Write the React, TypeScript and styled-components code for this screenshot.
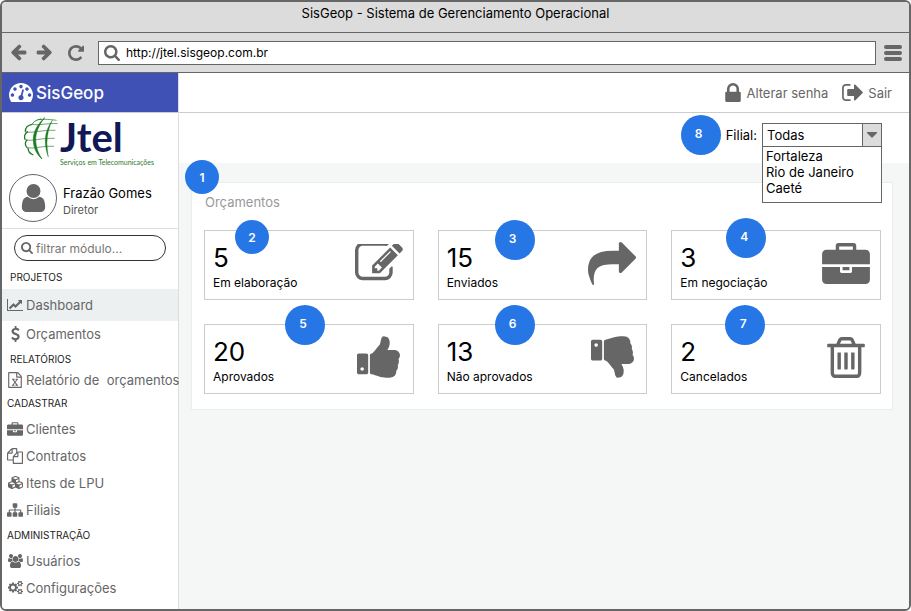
import React from "react";
import styled, { createGlobalStyle } from "styled-components";
import { FaCubes } from "react-icons/fa";

const ink = "#666666";
const accent = "#2676e6";
const line = "#cccccc";

const GlobalStyle = createGlobalStyle`
  *, *::before, *::after { box-sizing: border-box; }
  body { margin: 0; background: #fff; }
  body, button, input, select {
    font-family: Inter, "Open Sans", "Liberation Sans", sans-serif;
    font-size: 13px;
    color: #000;
  }
  button { padding: 0; border: 0; background: none; cursor: pointer; }
  a { color: inherit; text-decoration: none; }
  ul { list-style: none; margin: 0; padding: 0; }
`;

/* ---------- icons ---------- */

type Shape = { box: string; d: string; flip?: boolean };

const smallDots =
  "q0-53-37.5-90.5t-90.5-37.5-90.5 37.5-37.5 90.5 37.5 90.5 90.5 37.5 90.5-37.5 37.5-90.5z";
const bin = "v576q0 14-9 23t-23 9h-64q-14 0-23-9t-9-23v-576q0-14 9-23t23-9h64q14 0 23 9t9 23z";
const smallGear =
  "v140q0 16-149 31-12 27-30 52 51 113 51 138 0 4-4 7-122 71-124 71-8 0-46-47t-52-68q-20 2-30 2t-30-2q-14 21-52 68t-46 47q-2 0-124-71-4-3-4-7 0-25 51-138-18-25-30-52-149-15-149-31v-140q0-16 149-31 13-29 30-52-51-113-51-138 0-4 4-7 4-2 35-20t59-34 30-16q8 0 46 46.5t52 67.5q20-2 30-2t30 2q51-71 92-112l6-2q4 0 124 70 4 3 4 7 0 25-51 138 17 23 30 52 149 15 149 31z";
const thumb =
  "M320 1344q0-26-19-45t-45-19q-27 0-45.5 19t-18.5 45q0 27 18.5 45.5t45.5 18.5q26 0 45-18.5t19-45.5zm160-512v640q0 26-19 45t-45 19h-288q-26 0-45-19t-19-45v-640q0-26 19-45t45-19h288q26 0 45 19t19 45zm1184 0q0 86-55 149 15 44 15 76 3 76-43 137 17 56 0 117-15 57-54 94 9 112-49 181-64 76-197 78h-129q-66 0-144-15.5t-121.5-29-120.5-39.5q-123-43-158-44-26-1-45-19.5t-19-44.5v-641q0-25 18-43.5t43-20.5q24-2 76-59t101-121q68-87 101-120 18-18 31-48t17.5-48.5 13.5-60.5q7-39 12.5-61t19.5-52 34-50q19-19 45-19 46 0 82.5 10.5t60 26 40 40.5 24 45 12 50 5 45 .5 39q0 38-9.5 76t-19 60-27.5 56q-3 6-10 18t-11 22-8 24h277q78 0 135 57t57 135z";

const shapes: Record<string, Shape> = {
  back: {
    box: "64 128 1664 1664",
    d: "M1664 896v128q0 53-32.5 90.5t-84.5 37.5h-704l293 294q38 36 38 90t-38 90l-75 76q-37 37-90 37-52 0-91-37l-651-652q-37-37-37-90 0-52 37-91l651-650q38-38 91-38 52 0 90 38l75 74q38 38 38 91t-38 91l-293 293h704q52 0 84.5 37.5t32.5 90.5z",
  },
  reload: {
    box: "128 128 1536 1536",
    d: "M1664 256v448q0 26-19 45t-45 19h-448q-42 0-59-40-17-39 14-69l138-138q-148-137-349-137-104 0-198.5 40.5t-163.5 109.5-109.5 163.5-40.5 198.5 40.5 198.5 109.5 163.5 163.5 109.5 198.5 40.5q119 0 225-52t179-147q7-10 23-12 15 0 25 9l137 138q9 8 9.5 20.5t-7.5 22.5q-109 132-264 204.5t-327 72.5q-156 0-298-61t-245-164-164-245-61-298 61-298 164-245 245-164 298-61q147 0 284.5 55.5t244.5 156.5l130-129q29-31 70-14 39 17 39 59z",
  },
  search: {
    box: "64 128 1664 1664",
    d: "M1216 832q0-185-131.5-316.5t-316.5-131.5-316.5 131.5-131.5 316.5 131.5 316.5 316.5 131.5 316.5-131.5 131.5-316.5zm512 832q0 52-38 90t-90 38q-54 0-90-38l-343-342q-179 124-399 124-143 0-273.5-55.5t-225-150-150-225-55.5-273.5 55.5-273.5 150-225 225-150 273.5-55.5 273.5 55.5 225 150 150 225 55.5 273.5q0 220-124 399l343 343q37 37 37 90z",
  },
  gauge: {
    box: "0 256 1792 1408",
    d: `M384 1152${smallDots}m192-448${smallDots}m428 481l101-382q6-26-7.5-48.5t-38.5-29.5-48 6.5-30 39.5l-101 382q-60 5-107 43.5t-63 98.5q-20 77 20 146t117 89 146-20 89-117q16-60-6-117t-72-91zm660-33${smallDots}m-640-640${smallDots}m448 192${smallDots}m320 448q0 261-141 483-19 29-54 29h-1402q-35 0-54-29-141-221-141-483 0-182 71-348t191-286 286-191 348-71 348 71 286 191 191 286 71 348z`,
  },
  lock: {
    box: "320 128 1152 1408",
    d: "M640 768h512v-192q0-106-75-181t-181-75-181 75-75 181v192zm832 96v576q0 40-28 68t-68 28h-960q-40 0-68-28t-28-68v-576q0-40 28-68t68-28h32v-192q0-184 132-316t316-132 316 132 132 316v192h32q40 0 68 28t28 68z",
  },
  exit: {
    box: "64 256 1568 1280",
    d: "M704 1440q0 4 1 20t.5 26.5-3 23.5-10 19.5-20.5 6.5h-320q-119 0-203.5-84.5t-84.5-203.5v-704q0-119 84.5-203.5t203.5-84.5h320q13 0 22.5 9.5t9.5 22.5q0 4 1 20t.5 26.5-3 23.5-10 19.5-20.5 6.5h-320q-66 0-113 47t-47 113v704q0 66 47 113t113 47h312l11.5 1 11.5 3 8 5.5 7 9 2 13.5zm928-544q0 26-19 45l-544 544q-19 19-45 19t-45-19-19-45v-288h-448q-26 0-45-19t-19-45v-384q0-26 19-45t45-19h448v-288q0-26 19-45t45-19 45 19l544 544q19 19 19 45z",
  },
  user: {
    box: "256 128 1280 1536",
    d: "M1536 1399q0 109-62.5 187t-150.5 78h-854q-88 0-150.5-78t-62.5-187q0-85 8.5-160.5t31.5-152 58.5-131 94-89 134.5-34.5q131 128 313 128t313-128q76 0 134.5 34.5t94 89 58.5 131 31.5 152 8.5 160.5zm-256-887q0 159-112.5 271.5t-271.5 112.5-271.5-112.5-112.5-271.5 112.5-271.5 271.5-112.5 271.5 112.5 112.5 271.5z",
  },
  chart: {
    box: "0 128 2048 1536",
    d: "M2048 1536v128h-2048v-1536h128v1408h1920zm-128-1248v435q0 21-19.5 29.5t-35.5-7.5l-121-121-633 633q-10 10-23 10t-23-10l-233-233-416 416-192-192 585-585q10-10 23-10t23 10l233 233 464-464-121-121q-16-16-7.5-35.5t29.5-19.5h435q14 0 23 9t9 23z",
  },
  dollar: {
    box: "430 0 934 1792",
    d: "M1362 1185q0 153-99.5 263.5t-258.5 136.5v175q0 14-9 23t-23 9h-135q-13 0-22.5-9.5t-9.5-22.5v-175q-66-9-127.5-31t-101.5-44.5-74-48-46.5-37.5-17.5-18q-17-21-2-41l103-135q7-10 23-12 15-2 24 9l2 2q113 99 243 125 37 8 74 8 81 0 142.5-43t61.5-122q0-28-15-53t-33.5-42-58.5-37.5-66-32-80-32.5q-39-16-61.5-25t-61.5-26.5-62.5-31-56.5-35.5-53.5-42.5-43.5-49-35.5-58-21-66.5-8.5-78q0-138 98-242t255-134v-180q0-13 9.5-22.5t22.5-9.5h135q14 0 23 9t9 23v176q57 6 110.5 23t87 33.5 63.5 37.5 39 29 15 14q17 18 5 38l-81 146q-8 15-23 16-14 3-27-7-3-3-14.5-12t-39-26.5-58.5-32-74.5-26-85.5-11.5q-95 0-155 43t-60 111q0 26 8.5 48t29.5 41.5 39.5 33 56 31 60.5 27 70 27.5q53 20 81 31.5t76 35 75.5 42.5 62 50 53 63.5 31.5 76.5 13 94z",
  },
  sheet: {
    box: "128 0 1536 1792",
    d: "M1596 380q28 28 48 76t20 88v1152q0 40-28 68t-68 28h-1344q-40 0-68-28t-28-68v-1600q0-40 28-68t68-28h896q40 0 88 20t76 48zm-444-244v376h376q-10-29-22-41l-313-313q-12-12-41-22zm384 1528v-1024h-416q-40 0-68-28t-28-68v-416h-768v1536h1280zm-979-234v106h281v-106h-75l103-161q5-7 10-16.5t7.5-13.5 3.5-4h2q1 4 5 10 2 4 4.5 7.5t6 8 6.5 8.5l107 161h-76v106h291v-106h-68l-192-273 195-282h67v-107h-279v107h74l-103 159q-4 7-10 16.5t-9 13.5l-2 3h-2q-1-4-5-10-6-11-17-23l-106-159h76v-107h-290v107h68l189 272-194 283h-68z",
  },
  briefcase: {
    box: "0 0 1792 1536",
    d: "M640 256h512v-128h-512v128zm1152 640v480q0 66-47 113t-113 47h-1472q-66 0-113-47t-47-113v-480h672v160q0 26 19 45t45 19h320q26 0 45-19t19-45v-160h672zm-768 0v128h-256v-128h256zm768-480v384h-1792v-384q0-66 47-113t113-47h352v-160q0-40 28-68t68-28h576q40 0 68 28t28 68v160h352q66 0 113 47t47 113z",
  },
  files: {
    box: "0 0 1792 1792",
    d: "M1696 384q40 0 68 28t28 68v1216q0 40-28 68t-68 28h-960q-40 0-68-28t-28-68v-288h-544q-40 0-68-28t-28-68v-672q0-40 20-88t48-76l408-408q28-28 76-48t88-20h416q40 0 68 28t28 68v328q68-40 128-40h416zm-544 213l-299 299h299v-299zm-640-384l-299 299h299v-299zm196 647l316-316v-416h-384v416q0 40-28 68t-68 28h-416v640h512v-256q0-40 20-88t48-76zm956 804v-1152h-384v416q0 40-28 68t-68 28h-416v640h896z",
  },
  tree: {
    box: "0 128 1792 1536",
    d: "M1792 1248v320q0 40-28 68t-68 28h-320q-40 0-68-28t-28-68v-320q0-40 28-68t68-28h96v-192h-512v192h96q40 0 68 28t28 68v320q0 40-28 68t-68 28h-320q-40 0-68-28t-28-68v-320q0-40 28-68t68-28h96v-192h-512v192h96q40 0 68 28t28 68v320q0 40-28 68t-68 28h-320q-40 0-68-28t-28-68v-320q0-40 28-68t68-28h96v-192q0-52 38-90t90-38h512v-192h-96q-40 0-68-28t-28-68v-320q0-40 28-68t68-28h320q40 0 68 28t28 68v320q0 40-28 68t-68 28h-96v192h512q52 0 90 38t38 90v192h96q40 0 68 28t28 68z",
  },
  users: {
    box: "0 0 1920 1792",
    d: "M593 896q-162 5-265 128h-134q-82 0-138-40.5t-56-118.5q0-353 124-353 6 0 43.5 21t97.5 42.5 119 21.5q67 0 133-23-5 37-5 66 0 139 81 256zm1071 637q0 120-73 189.5t-194 69.5h-874q-121 0-194-69.5t-73-189.5q0-53 3.5-103.5t14-109 26.5-108.5 43-97.5 62-81 85.5-53.5 111.5-20q10 0 43 21.5t73 48 107 48 135 21.5 135-21.5 107-48 73-48 43-21.5q61 0 111.5 20t85.5 53.5 62 81 43 97.5 26.5 108.5 14 109 3.5 103.5zm-1024-1277q0 106-75 181t-181 75-181-75-75-181 75-181 181-75 181 75 75 181zm704 384q0 159-112.5 271.5t-271.5 112.5-271.5-112.5-112.5-271.5 112.5-271.5 271.5-112.5 271.5 112.5 112.5 271.5zm576 225q0 78-56 118.5t-138 40.5h-134q-103-123-265-128 81-117 81-256 0-29-5-66 66 23 133 23 59 0 119-21.5t97.5-42.5 43.5-21q124 0 124 353zm-128-609q0 106-75 181t-181 75-181-75-75-181 75-181 181-75 181 75 75 181z",
  },
  gears: {
    box: "0 64 1920 1664",
    d: `M896 896q0-106-75-181t-181-75-181 75-75 181 75 181 181 75 181-75 75-181zm768 512q0-52-38-90t-90-38-90 38-38 90q0 53 37.5 90.5t90.5 37.5 90.5-37.5 37.5-90.5zm0-1024q0-52-38-90t-90-38-90 38-38 90q0 53 37.5 90.5t90.5 37.5 90.5-37.5 37.5-90.5zm-384 421v185q0 10-7 19.5t-16 10.5l-155 24q-11 35-32 76 34 48 90 115 7 11 7 20 0 12-7 19-23 30-82.5 89.5t-78.5 59.5q-11 0-21-7l-115-90q-37 19-77 31-11 108-23 155-7 24-30 24h-186q-11 0-20-7.5t-10-17.5l-23-153q-34-10-75-31l-118 89q-7 7-20 7-11 0-21-8-144-133-144-160 0-9 7-19 10-14 41-53t47-61q-23-44-35-82l-152-24q-10-1-17-9.5t-7-19.5v-185q0-10 7-19.5t16-10.5l155-24q11-35 32-76-34-48-90-115-7-11-7-20 0-12 7-20 22-30 82-89t79-59q11 0 21 7l115 90q34-18 77-32 11-108 23-154 7-24 30-24h186q11 0 20 7.5t10 17.5l23 153q34 10 75 31l118-89q8-7 20-7 11 0 21 8 144 133 144 160 0 8-7 19-12 16-42 54t-45 60q23 48 34 82l152 23q10 2 17 10.5t7 19.5zm640 533${smallGear}m0-1024${smallGear}`,
  },
  edit: {
    box: "0 256 1792 1280",
    d: "M888 1184l116-116-152-152-116 116v56h96v96h56zm440-720q-16-16-33 1l-350 350q-17 17-1 33t33-1l350-350q17-17 1-33zm80 594v190q0 119-84.5 203.5t-203.5 84.5h-832q-119 0-203.5-84.5t-84.5-203.5v-832q0-119 84.5-203.5t203.5-84.5h832q63 0 117 25 15 7 18 23 3 17-9 29l-49 49q-14 14-32 8-23-6-45-6h-832q-66 0-113 47t-47 113v832q0 66 47 113t113 47h832q66 0 113-47t47-113v-126q0-13 9-22l64-64q15-15 35-7t20 29zm-96-738l288 288-672 672h-288v-288zm444 132l-92 92-288-288 92-92q28-28 68-28t68 28l152 152q28 28 28 68t-28 68z",
  },
  share: {
    box: "0 64 1792 1600",
    d: "M1792 640q0 26-19 45l-512 512q-19 19-45 19t-45-19-19-45v-256h-224q-98 0-175.5 6t-154 21.5-133 42.5-105.5 69.5-80 101-48.5 138.5-17.5 181q0 55 5 123 0 6 2.5 23.5t2.5 26.5q0 15-8.5 25t-23.5 10q-16 0-28-17-7-9-13-22t-13.5-30-10.5-24q-127-285-127-451 0-199 53-333 162-403 875-403h224v-256q0-26 19-45t45-19 45 19l512 512q19 19 19 45z",
  },
  trash: {
    box: "192 128 1408 1536",
    d: `M704 736${bin}m256 0${bin}m256 0${bin}m128 724v-948h-896v948q0 22 7 40.5t14.5 27 10.5 8.5h832q3 0 10.5-8.5t14.5-27 7-40.5zm-672-1076h448l-48-117q-7-9-17-11h-317q-10 2-17 11zm928 32v64q0 14-9 23t-23 9h-96v948q0 83-47 143.5t-113 60.5h-832q-66 0-113-58.5t-47-141.5v-952h-96q-14 0-23-9t-9-23v-64q0-14 9-23t23-9h309l70-167q15-37 54-63t79-26h320q40 0 79 26t54 63l70 167h309q14 0 23 9t9 23z`,
  },
  up: { box: "64 128 1600 1536", d: thumb },
  down: { box: "64 128 1600 1536", d: thumb, flip: true },
};

const Svg = styled.svg<{ $flip?: boolean; $mirror?: boolean }>`
  display: block;
  flex: none;
  fill: currentColor;
  transform: ${(p) => (p.$flip ? "scaleY(-1)" : p.$mirror ? "scaleX(-1)" : "none")};
`;

function Icon({ name, w, h, mirror }: { name: string; w: number; h: number; mirror?: boolean }) {
  const s = shapes[name];
  return (
    <Svg viewBox={s.box} width={w} height={h} $flip={s.flip} $mirror={mirror} aria-hidden="true">
      <path d={s.d} />
    </Svg>
  );
}

/* ---------- browser frame ---------- */

const Browser = styled.div`
  display: flex;
  flex-direction: column;
  min-height: 100vh;
  border: 2px solid ${ink};
  border-radius: 6px;
  background: #fff;
  overflow: hidden;
`;

const TitleBar = styled.header`
  height: 31px;
  padding-bottom: 8px;
  display: flex;
  align-items: center;
  justify-content: center;
  background: #dcdcdc;
  border-bottom: 1px solid ${ink};
`;

const Toolbar = styled.form`
  height: 40px;
  display: flex;
  align-items: center;
  gap: 8px;
  padding: 0 7px;
  background: #dcdcdc;
  border-bottom: 1px solid ${ink};
`;

const ToolButton = styled.button<{ $wide?: boolean }>`
  width: ${(p) => (p.$wide ? 29 : 18)}px;
  display: flex;
  justify-content: center;
  color: ${ink};
`;

const AddressBox = styled.label`
  flex: 1;
  height: 24px;
  display: flex;
  align-items: center;
  gap: 6px;
  padding: 0 5px;
  background: #fff;
  border: 1px solid ${ink};
  color: ${ink};
`;

const AddressInput = styled.input`
  flex: 1;
  min-width: 0;
  padding: 0;
  border: 0;
  outline: 0;
  background: none;
  font-size: 12px;
`;

const MenuLines = styled.span`
  width: 18px;
  display: grid;
  gap: 2px;
  &::before, &::after, & > i { content: ""; height: 4px; border-radius: 2px; background: ${ink}; }
`;

/* ---------- app shell ---------- */

const Shell = styled.div`
  flex: 1;
  display: flex;
`;

const Sidebar = styled.aside`
  flex: none;
  width: 177px;
  border-right: 1px solid #dddddd;
  background: #fff;
`;

const Brand = styled.h1`
  height: 39px;
  margin: 0;
  padding: 0 7px;
  display: flex;
  align-items: center;
  gap: 3px;
  background: #3f51b5;
  color: #fff;
  font-size: 17px;
  font-weight: 500;
`;

const Logo = styled.div`
  height: 58px;
  padding: 4px 0 0 22px;
  border-top: 1px solid ${line};
  display: flex;
`;

const LogoWords = styled.div`
  font-family: Lato, sans-serif;
  white-space: nowrap;
`;

const LogoName = styled.div`
  font-size: 40px;
  line-height: 41px;
  font-weight: 700;
  color: #101858;
`;

const LogoTag = styled.div`
  font-size: 7px;
  line-height: 8px;
  color: #2a7a2e;
`;

const Profile = styled.div`
  display: flex;
  align-items: center;
  gap: 6px;
  padding: 4px 7px 6px;
  border-bottom: 1px solid #dddddd;
`;

const Avatar = styled.div`
  width: 48px;
  height: 48px;
  display: flex;
  align-items: center;
  justify-content: center;
  border: 1px solid ${ink};
  border-radius: 50%;
  color: ${ink};
`;

const ProfileText = styled.div`
  padding-top: 6px;
`;

const ProfileName = styled.div`
  line-height: 18px;
`;

const ProfileRole = styled.div`
  font-size: 11px;
  line-height: 16px;
  color: #555;
`;

const Filter = styled.label`
  height: 26px;
  margin: 6px 12px 4px;
  padding: 0 6px;
  display: flex;
  align-items: center;
  gap: 3px;
  border: 1px solid #333;
  border-radius: 13px;
  color: ${ink};
`;

const FilterInput = styled.input`
  flex: 1;
  min-width: 0;
  padding: 0;
  border: 0;
  outline: 0;
  background: none;
  font-size: 12px;
  &::placeholder { color: #777; opacity: 1; }
`;

const GroupTitle = styled.h2<{ $inset?: boolean }>`
  height: 24px;
  margin: 0;
  padding-left: ${(p) => (p.$inset ? 8 : 5)}px;
  font-size: 10px;
  line-height: 24px;
  font-weight: 400;
  color: #222;
`;

const rowHeight = { tall: 32, snug: 26, short: 20, normal: 27 };

const NavLink = styled.a<{ $size: keyof typeof rowHeight }>`
  height: ${(p) => rowHeight[p.$size]}px;
  padding-left: 5px;
  padding-bottom: ${(p) => (p.$size === "short" ? 2 : 0)}px;
  display: flex;
  align-items: center;
  gap: 3px;
  background: ${(p) => (p.$size === "tall" ? "#ecf0f1" : "none")};
  color: ${ink};
  white-space: pre;
`;

const NavIcon = styled.span`
  width: 16px;
  flex: none;
  display: flex;
  justify-content: center;
`;

const Main = styled.main`
  flex: 1;
  min-width: 0;
  display: flex;
  flex-direction: column;
  background: #f5f7f6;
`;

const AccountBar = styled.div`
  height: 40px;
  padding-right: 17px;
  display: flex;
  align-items: center;
  justify-content: flex-end;
  gap: 14px;
  background: #fff;
  border-bottom: 1px solid ${line};
`;

const AccountLink = styled.a`
  display: flex;
  align-items: center;
  gap: 5px;
  color: ${ink};
`;

const BranchBar = styled.div`
  height: 50px;
  padding: 2px 27px 8px 0;
  display: flex;
  align-items: center;
  justify-content: flex-end;
  gap: 5px;
  background: #fff;
`;

const Combo = styled.div`
  position: relative;
  width: 120px;
  display: flex;
  color: ${ink};
`;

const Select = styled.select`
  appearance: none;
  width: 100%;
  height: 24px;
  padding: 0 20px 0 4px;
  border: 1px solid ${ink};
  border-radius: 0;
  background: linear-gradient(to left, #dcdcdc 18px, ${ink} 18px, ${ink} 19px, #fff 19px);
  outline: 0;
`;

const Caret = styled.svg`
  position: absolute;
  right: 5px;
  top: 9px;
  fill: currentColor;
  pointer-events: none;
`;

const Options = styled.ul`
  && {
    position: absolute;
    z-index: 2;
    top: 23px;
    left: 0;
    right: 0;
    padding: 1px 3px 6px;
    min-height: 57px;
    border: 1px solid ${ink};
    background: #fff;
    color: #000;
    line-height: 16px;
  }
`;

const Dot = styled.span<{ $small?: boolean }>`
  flex: none;
  width: ${(p) => (p.$small ? 34 : 40)}px;
  height: ${(p) => (p.$small ? 34 : 40)}px;
  padding: ${(p) => (p.$small ? "0" : "0 4px 4px 0")};
  display: flex;
  align-items: center;
  justify-content: center;
  border-radius: 50%;
  background: ${accent};
  color: #fff;
  font-size: 12px;
  font-weight: 600;
`;

const Pin = styled(Dot)<{ $x: number; $y: number }>`
  position: absolute;
  left: ${(p) => p.$x}px;
  top: ${(p) => p.$y}px;
`;

const Panel = styled.section`
  position: relative;
  margin: 19px 16px 0 12px;
  padding: 0 11px 15px 12px;
  border: 1px solid #ebedec;
  background: #fff;
`;

const PanelTitle = styled.h2`
  margin: 0;
  padding: 8px 0 17px 1px;
  font-size: 13px;
  line-height: 22px;
  font-weight: 400;
  color: #999;
`;

const Cards = styled.div`
  display: grid;
  grid-template-columns: repeat(3, 1fr);
  gap: 24px;
`;

const Card = styled.article`
  position: relative;
  height: 70px;
  padding: 0 9px 4px 8px;
  display: flex;
  align-items: center;
  justify-content: space-between;
  border: 1px solid ${line};
  color: ${ink};
`;

const CardText = styled.div`
  padding-top: 10px;
  color: #000;
`;

const CardCount = styled.div`
  font-size: 26px;
  line-height: 30px;
`;

const CardLabel = styled.div`
  font-size: 12px;
  line-height: 20px;
`;

const CardArt = styled.div`
  width: 50px;
  display: flex;
  justify-content: center;
`;

function Globe() {
  return (
    <svg width="36" height="46" viewBox="0 0 108 138" fill="#1f7a24" stroke="#1f7a24" strokeWidth="1" aria-hidden="true">
      <path d="M62 2C40 22 27 46 28 70c1 22 8 40 26 56C42 108 36 92 35 70 34 46 46 22 62 2z" strokeWidth="2" />
      <path d="M86 8C70 30 62 54 64 78c1 16 4 30 9 42-2-14-4-28-4-42 0-24 6-50 17-70z" />
      <g fill="none" strokeWidth="3">
        <path d="M52 6C38 8 28 14 25 22" />
        <path d="M25 22C10 24 4 34 4 44" strokeWidth="4" />
        <path d="M12 44C2 48-1 60 4 68" strokeWidth="4" />
        <path d="M10 68C2 74 2 86 10 92" strokeWidth="4" />
        <path d="M12 92c0 10 6 18 16 22" strokeWidth="4" />
      </g>
      <g fill="none" strokeWidth="2">
        <path d="M25 22c18 4 44-4 76-2" />
        <path d="M4 44c20 6 50-6 90-4" />
        <path d="M4 68c20 6 50-6 88-4" />
        <path d="M10 92c20 4 46-6 80-4" />
        <path d="M44 8c16-2 34-1 54 2" />
      </g>
    </svg>
  );
}

type NavItem = { label: string; icon: React.ReactNode; size?: keyof typeof rowHeight };
type NavGroup = { title: string; inset?: boolean; items: NavItem[] };

const groups: NavGroup[] = [
  {
    title: "PROJETOS",
    inset: true,
    items: [
      { label: "Dashboard", icon: <Icon name="chart" w={16} h={12} />, size: "tall" },
      { label: "Orçamentos", icon: <Icon name="dollar" w={9} h={16} />, size: "snug" },
    ],
  },
  {
    title: "RELATÓRIOS",
    inset: true,
    items: [{ label: "Relatório de  orçamentos", icon: <Icon name="sheet" w={14} h={16} />, size: "short" }],
  },
  {
    title: "CADASTRAR",
    items: [
      { label: "Clientes", icon: <Icon name="briefcase" w={16} h={14} /> },
      { label: "Contratos", icon: <Icon name="files" w={16} h={16} /> },
      { label: "Itens de LPU", icon: <FaCubes size={15} /> },
      { label: "Filiais", icon: <Icon name="tree" w={16} h={14} /> },
    ],
  },
  {
    title: "ADMINISTRAÇÃO",
    items: [
      { label: "Usuários", icon: <Icon name="users" w={15} h={14} /> },
      { label: "Configurações", icon: <Icon name="gears" w={15} h={13} /> },
    ],
  },
];

const cards = [
  { count: 5, label: "Em elaboração", icon: "edit", w: 48, h: 38, pin: 2, x: 30, y: -11, small: true },
  { count: 15, label: "Enviados", icon: "share", w: 48, h: 43, pin: 3, x: 56, y: -11 },
  { count: 3, label: "Em negociação", icon: "briefcase", w: 48, h: 41, pin: 4, x: 54, y: -13 },
  { count: 20, label: "Aprovados", icon: "up", w: 43, h: 42, pin: 5, x: 80, y: -20 },
  { count: 13, label: "Não aprovados", icon: "down", w: 43, h: 42, pin: 6, x: 56, y: -20 },
  { count: 2, label: "Cancelados", icon: "trash", w: 38, h: 41, pin: 7, x: 53, y: -20 },
];

export default function App() {
  return (
    <>
      <GlobalStyle />
      <Browser>
        <TitleBar>SisGeop - Sistema de Gerenciamento Operacional</TitleBar>
        <Toolbar onSubmit={(e) => e.preventDefault()}>
          <ToolButton type="button" aria-label="Voltar">
            <Icon name="back" w={17} h={17} />
          </ToolButton>
          <ToolButton type="button" aria-label="Avançar">
            <Icon name="back" w={17} h={17} mirror />
          </ToolButton>
          <ToolButton type="button" $wide aria-label="Recarregar">
            <Icon name="reload" w={16} h={16} />
          </ToolButton>
          <AddressBox>
            <Icon name="search" w={16} h={16} />
            <AddressInput aria-label="Endereço" defaultValue="http://jtel.sisgeop.com.br" />
          </AddressBox>
          <ToolButton type="button" aria-label="Menu">
            <MenuLines>
              <i />
            </MenuLines>
          </ToolButton>
        </Toolbar>

        <Shell>
          <Sidebar>
            <Brand>
              <Icon name="gauge" w={24} h={19} />
              SisGeop
            </Brand>
            <Logo>
              <Globe />
              <LogoWords>
                <LogoName>Jtel</LogoName>
                <LogoTag>Serviços em Telecomunicações</LogoTag>
              </LogoWords>
            </Logo>
            <Profile>
              <Avatar>
                <Icon name="user" w={25} h={28} />
              </Avatar>
              <ProfileText>
                <ProfileName>Frazão Gomes</ProfileName>
                <ProfileRole>Diretor</ProfileRole>
              </ProfileText>
            </Profile>
            <Filter>
              <Icon name="search" w={12} h={12} />
              <FilterInput aria-label="Filtrar módulo" placeholder="filtrar módulo..." />
            </Filter>
            <nav>
              {groups.map((g) => (
                <section key={g.title}>
                  <GroupTitle $inset={g.inset}>{g.title}</GroupTitle>
                  <ul>
                    {g.items.map((item) => (
                      <li key={item.label}>
                        <NavLink href="#" $size={item.size ?? "normal"}>
                          <NavIcon>{item.icon}</NavIcon>
                          {item.label}
                        </NavLink>
                      </li>
                    ))}
                  </ul>
                </section>
              ))}
            </nav>
          </Sidebar>

          <Main>
            <AccountBar>
              <AccountLink href="#">
                <Icon name="lock" w={16} h={19} />
                Alterar senha
              </AccountLink>
              <AccountLink href="#">
                <Icon name="exit" w={21} h={17} />
                Sair
              </AccountLink>
            </AccountBar>
            <BranchBar>
              <Dot>8</Dot>
              <label htmlFor="branch">Filial:</label>
              <Combo>
                <Select id="branch" defaultValue="Todas">
                  <option>Todas</option>
                  <option>Fortaleza</option>
                  <option>Rio de Janeiro</option>
                  <option>Caeté</option>
                </Select>
                <Caret width="10" height="6" viewBox="0 0 10 6" aria-hidden="true">
                  <path d="M0 0h10v1L5 6 0 1z" />
                </Caret>
                <Options>
                  <li>Fortaleza</li>
                  <li>Rio de Janeiro</li>
                  <li>Caeté</li>
                </Options>
              </Combo>
            </BranchBar>
            <Panel>
              <Pin $small $x={-7} $y={-23}>1</Pin>
              <PanelTitle>Orçamentos</PanelTitle>
              <Cards>
                {cards.map((c) => (
                  <Card key={c.label}>
                    <CardText>
                      <CardCount>{c.count}</CardCount>
                      <CardLabel>{c.label}</CardLabel>
                    </CardText>
                    <CardArt>
                      <Icon name={c.icon} w={c.w} h={c.h} />
                    </CardArt>
                    <Pin $small={c.small} $x={c.x} $y={c.y}>{c.pin}</Pin>
                  </Card>
                ))}
              </Cards>
            </Panel>
          </Main>
        </Shell>
      </Browser>
    </>
  );
}
